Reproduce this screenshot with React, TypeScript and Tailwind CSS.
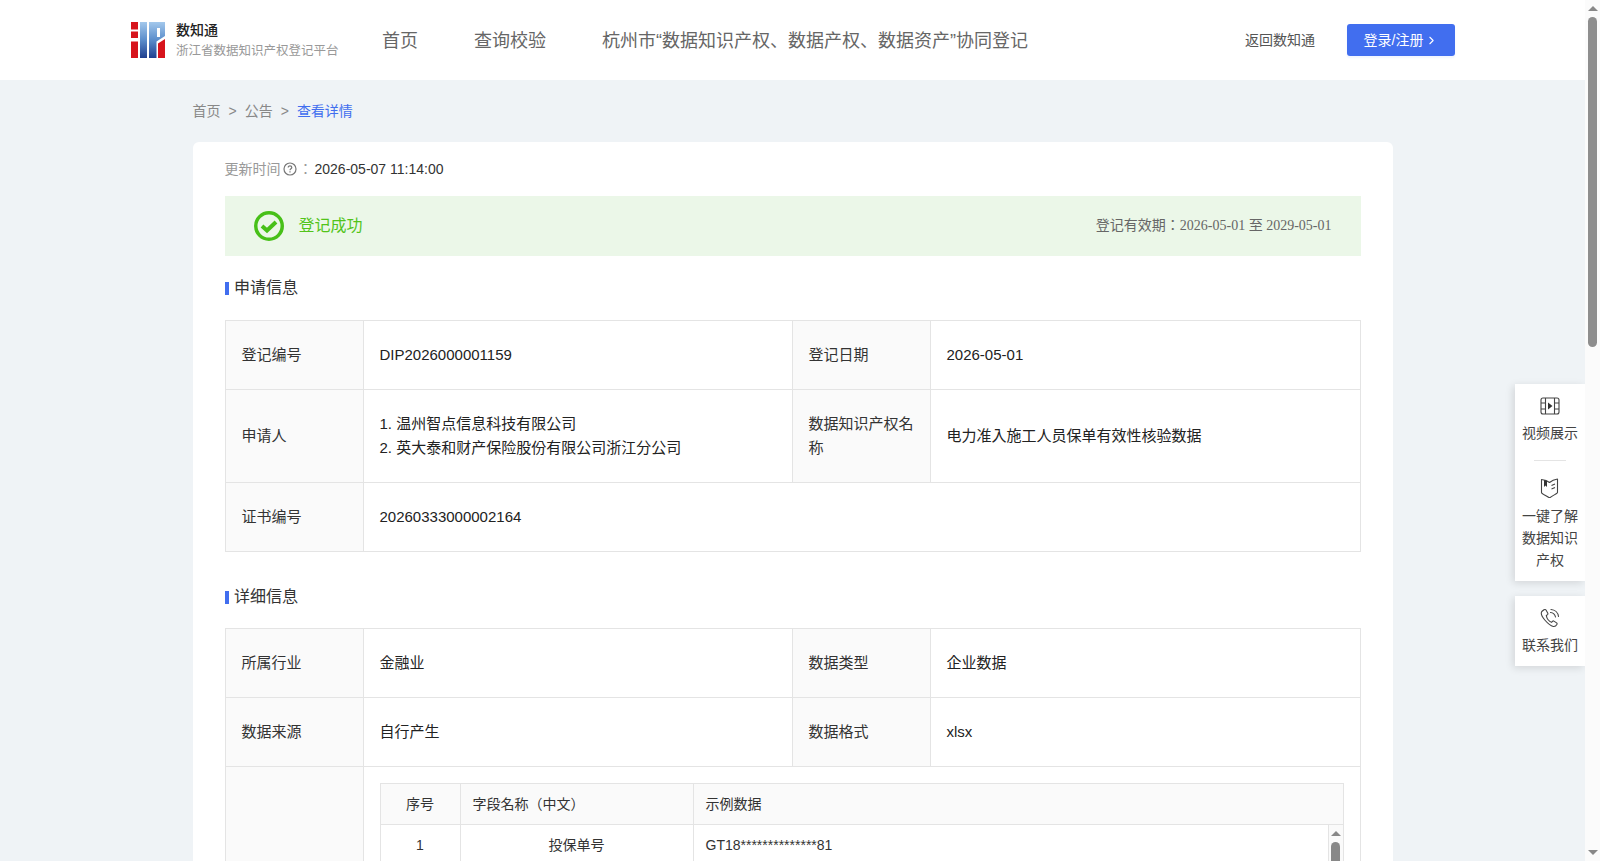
import { ChevronRight } from "lucide-react";

const font = "font-['Liberation_Sans','Noto_Sans_CJK_JP',sans-serif]";

function Logo() {
  return (
    <svg width="35" height="36" viewBox="0 0 35 36" className="shrink-0">
      <defs>
        <linearGradient id="blueBar" x1="0" y1="0" x2="0" y2="1">
          <stop offset="0" stopColor="#a3c8ec" />
          <stop offset="0.5" stopColor="#5b8dcb" />
          <stop offset="1" stopColor="#1f3f8f" />
        </linearGradient>
      </defs>
      <rect x="0" y="0" width="7" height="7.500" fill="#d7141c" />
      <rect x="0" y="9.500" width="7" height="6.500" fill="#d7141c" />
      <rect x="0" y="19.500" width="7" height="16.500" fill="#d7141c" />
      <rect x="9" y="0" width="7" height="36" fill="url(#blueBar)" />
      <path d="M18 0h16v14l-8.500 5.500v16.500h-7.500z" fill="url(#blueBar)" />
      <rect x="26" y="6" width="3" height="9" fill="#fff" />
      <path d="M27 36V21.500l7-4.500v19z" fill="#d7141c" />
    </svg>
  );
}

function SectionTitle({ children }: { children: string }) {
  return (
    <div className="flex items-center gap-[5.5px] text-[16px] leading-[24px] text-[#333]">
      <span className="w-1 h-[13px] bg-[#416eef]" />
      {children}
    </div>
  );
}

const labelCls = "bg-[#fafafa] px-4 text-[15px] leading-[24px] text-[#333] flex items-center border-[#e4e4e4]";
const valueCls = "bg-white px-4 text-[15px] leading-[24px] text-[#222] flex items-center border-[#e4e4e4]";

function Row({ label, value, label2, value2, h }: { label: string; value: React.ReactNode; label2?: string; value2?: React.ReactNode; h: string }) {
  return (
    <div className={`flex ${h} border-b border-[#e4e4e4] last:border-b-0`}>
      <div className={`${labelCls} w-[138px] border-r`}>{label}</div>
      {label2 ? (
        <>
          <div className={`${valueCls} w-[429px] border-r`}>{value}</div>
          <div className={`${labelCls} w-[138px] border-r`}>{label2}</div>
          <div className={`${valueCls} flex-1`}>{value2}</div>
        </>
      ) : (
        <div className={`${valueCls} flex-1`}>{value}</div>
      )}
    </div>
  );
}

function VideoIcon() {
  return (
    <svg width="20" height="18" viewBox="0 0 20 18" fill="none" stroke="#444" strokeWidth="1.1">
      <rect x="1" y="1" width="18" height="16" rx="2" />
      <path d="M5.500 1v16M14.500 1v16M1 6h4.500M1 12h4.500M14.500 6H19M14.500 12H19" />
      <path d="M8 5.500l4.500 3.500-4.500 3.500z" fill="#333" stroke="none" />
    </svg>
  );
}

function BookIcon() {
  return (
    <svg width="20" height="20" viewBox="0 0 20 20" fill="none" stroke="#444" strokeWidth="1.1" strokeLinejoin="round">
      <path d="M1.500 1.500c3 .3 6 1.300 8 3 2-1.700 4.500-3 8-3.500v13.500c0 1-5 3-8 5.500-3-2.500-8-4-8-5.500z" />
      <path d="M4 2v7l1.500-1.500L7 9V3z" fill="#333" stroke="none" />
      <path d="M11.500 7.500l3.500-1.500M11.500 11l3.500-1.500" />
    </svg>
  );
}

function PhoneIcon() {
  return (
    <svg width="20" height="20" viewBox="0 0 20 20" fill="none" stroke="#444" strokeWidth="1.1" strokeLinecap="round">
      <path d="M4 1.800 1.800 3.500c-1 1.500 0 5 3 8.500s6.500 6 8.500 6.500c1.500.3 3-1 3.700-2.300.2-.5 0-1-.4-1.300l-2.700-1.800c-.5-.3-1-.2-1.400.2l-1 1c-1-.3-2.500-1.500-3.600-2.800S6.500 8.500 6.300 7.500l1.200-.9c.4-.4.500-.9.300-1.400L6 2c-.4-.6-1.300-.7-2-.2z" />
      <path d="M10.500 4.500c2.500.2 4.500 2 5 4.500M11 1.500c4 .2 7 3.200 7.500 7" />
    </svg>
  );
}

export default function App() {
  return (
    <div className={`${font} h-[861px] overflow-hidden flex bg-white`}>
      <div className="w-[1585px] relative flex flex-col bg-[#eff3f6]">
        <header className="h-[80px] bg-white flex items-center pl-[131px] shrink-0">
          <Logo />
          <div className="ml-[10px] w-[194px]">
            <div className="text-[14px] leading-[20px] text-[#222] font-medium">数知通</div>
            <div className="mt-[1px] text-[12.5px] leading-[20px] text-[#999]">浙江省数据知识产权登记平台</div>
          </div>
          <nav className="flex items-center gap-[56px] text-[18px] text-[#666] ml-[-5px] pl-[17px] pt-[2px]">
            <span>首页</span>
            <span>查询校验</span>
            <span>杭州市“数据知识产权、数据产权、数据资产”协同登记</span>
          </nav>
          <span className="ml-auto text-[14px] text-[#555]">返回数知通</span>
          <button className="ml-[32px] mr-[130px] w-[108px] h-[32px] rounded-[3px] bg-[#416eef] text-white text-[14px] flex items-center justify-center gap-[2px] shadow-[0_2px_2px_rgba(65,110,239,0.08)]">
            登录/注册
            <ChevronRight size={13} />
          </button>
        </header>

        <main className="w-[1200px] mx-auto flex-1 min-h-0">
          <div className="h-[62px] flex items-center text-[14px] text-[#888] gap-2">
            <span>首页</span>
            <span>&gt;</span>
            <span>公告</span>
            <span>&gt;</span>
            <span className="text-[#416eef]">查看详情</span>
          </div>
          <div className="bg-white rounded-t-[6px] px-8 h-[720px]">
            <div className="h-[54px] flex items-center text-[14px] text-[#999]">
              更新时间
              <svg width="14" height="14" viewBox="0 0 14 14" fill="none" stroke="#777" strokeWidth="1.2" className="ml-[2px] mr-[2px]">
                <circle cx="7" cy="7" r="6" />
                <path d="M5.200 5.500c0-2.300 3.600-2.300 3.600 0 0 1.300-1.800 1.300-1.800 2.800M7 9.300v1.200" />
              </svg>
              ：<span className="ml-[2px] text-[#333]">2026-05-07 11:14:00</span>
            </div>
            <div className="h-[60px] bg-[#ebf7e8] flex items-center pl-[29px] pr-[29px]">
              <svg width="30" height="30" viewBox="0 0 30 30" fill="none">
                <circle cx="15" cy="15" r="13.250" stroke="#47c018" strokeWidth="3.500" />
                <path d="M8 15l5 4.500 9-8.500" stroke="#47c018" strokeWidth="4" />
              </svg>
              <span className="ml-[15px] text-[16px] text-[#52c41a]">登记成功</span>
              <span className="ml-auto mb-[2px] text-[14px] text-[#666] font-['Liberation_Serif','Noto_Sans_CJK_JP',serif]">登记有效期：2026-05-01 至 2029-05-01</span>
            </div>
            <div className="mt-[20px]"><SectionTitle>申请信息</SectionTitle></div>
            <div className="mt-[20px] border border-[#e4e4e4]">
              <Row h="h-[69px]" label="登记编号" value="DIP2026000001159" label2="登记日期" value2="2026-05-01" />
              <Row
                h="h-[93px]"
                label="申请人"
                value={<div>1. 温州智点信息科技有限公司<br />2. 英大泰和财产保险股份有限公司浙江分公司</div>}
                label2="数据知识产权名称"
                value2="电力准入施工人员保单有效性核验数据"
              />
              <Row h="h-[68px]" label="证书编号" value="20260333000002164" />
            </div>
            <div className="mt-[33px]"><SectionTitle>详细信息</SectionTitle></div>
            <div className="mt-[19px] border-x border-t border-[#e4e4e4]">
              <Row h="h-[69px]" label="所属行业" value="金融业" label2="数据类型" value2="企业数据" />
              <Row h="h-[69px] !border-b" label="数据来源" value="自行产生" label2="数据格式" value2="xlsx" />
              <div className="flex h-[100px]">
                <div className="w-[138px] bg-[#fafafa] border-r border-[#e4e4e4]" />
                <div className="flex-1 px-4 pt-4">
                  <div className="border border-[#e4e4e4] text-[14px] text-[#333]">
                    <div className="flex h-[41px] bg-[#fafafa] border-b border-[#e4e4e4]">
                      <div className="w-[80px] border-r border-[#e4e4e4] flex items-center justify-center">序号</div>
                      <div className="w-[233px] border-r border-[#e4e4e4] flex items-center px-3">字段名称（中文）</div>
                      <div className="flex-1 flex items-center px-3">示例数据</div>
                    </div>
                    <div className="flex h-[41px]">
                      <div className="w-[80px] border-r border-[#e4e4e4] flex items-center justify-center">1</div>
                      <div className="w-[233px] border-r border-[#e4e4e4] flex items-center justify-center">投保单号</div>
                      <div className="flex-1 flex items-center px-3">GT18**************81</div>
                      <div className="w-[15px] border-l border-[#e4e4e4] bg-[#fafafa] flex flex-col items-center pt-[6px]">
                        <span className="w-0 h-0 border-x-[5px] border-x-transparent border-b-[5px] border-b-[#888]" />
                        <span className="w-[9px] h-[30px] mt-[6px] rounded-full bg-[#888]" />
                      </div>
                    </div>
                  </div>
                </div>
              </div>
            </div>
          </div>
        </main>

        <div className="absolute right-0 top-[384px] w-[70px] flex flex-col gap-[15px] text-[14px] leading-[22px] text-[#444] text-center">
          <div className="bg-white shadow-[-2px_2px_8px_rgba(0,0,0,0.12)] px-[5px] pt-[13px] pb-[10px] flex flex-col items-center">
            <VideoIcon />
            <div className="mt-[7px]">视频展示</div>
            <div className="w-[32px] h-px bg-[#e4e4e4] mt-[16px] mb-[17px]" />
            <BookIcon />
            <div className="mt-[7px]">一键了解数据知识产权</div>
          </div>
          <div className="bg-white shadow-[-2px_2px_8px_rgba(0,0,0,0.12)] px-[5px] pt-[12px] pb-[10px] flex flex-col items-center">
            <PhoneIcon />
            <div className="mt-[6px]">联系我们</div>
          </div>
        </div>
      </div>

      <div className="w-[15px] bg-[#fbfbfb] flex flex-col items-center pt-[6px] relative">
        <span className="w-0 h-0 border-x-[5px] border-x-transparent border-b-[5px] border-b-[#888]" />
        <span className="w-[9px] h-[330px] mt-[6px] rounded-full bg-[#8e8e8e]" />
        <span className="absolute bottom-[6px] w-0 h-0 border-x-[5px] border-x-transparent border-t-[5px] border-t-[#888]" />
      </div>
    </div>
  );
}
